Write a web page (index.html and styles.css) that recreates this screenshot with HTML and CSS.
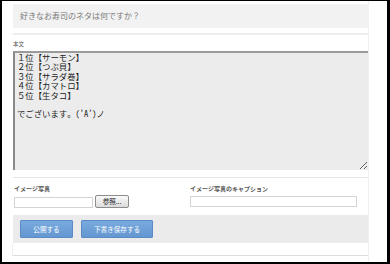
FILE: index.html
```html
<!DOCTYPE html>
<html lang="ja">
<head>
    <meta charset="UTF-8">
    <title>投稿の編集</title>
    <link rel="stylesheet" href="styles.css">
</head>
<body>
    <div class="frame">
        <div class="panel">
            <div class="question">好きなお寿司のネタは何ですか？</div>
            <div class="rule"></div>
            <div class="body-label">本文</div>
            <textarea class="body-text" readonly>１位【サーモン】
２位【つぶ貝】
３位【サラダ巻】
４位【カマトロ】
５位【生タコ】

でございます。('A')ノ</textarea>
            <div class="fields">
                <div class="field field-photo">
                    <div class="field-label">イメージ写真</div>
                    <div class="file-row">
                        <input type="text" class="text-input file-path">
                        <button class="browse">参照...</button>
                    </div>
                </div>
                <div class="field field-caption">
                    <div class="field-label">イメージ写真のキャプション</div>
                    <input type="text" class="text-input caption">
                </div>
            </div>
            <div class="actions">
                <button class="btn">公開する</button>
                <button class="btn btn-wide">下書き保存する</button>
            </div>
            <div class="footer-space"></div>
        </div>
    </div>
</body>
</html>
```

FILE: styles.css
```css
body {
    margin: 0;
    padding: 0;
    background-color: #fff;
    font-family: "Noto Sans CJK JP", "Noto Sans", sans-serif;
}
.frame {
    width: 390px;
    height: 264px;
    box-sizing: border-box;
    border-style: solid;
    border-color: #000;
    border-width: 1px 3px 2px 2px;
    padding-left: 11px;
    overflow: hidden;
    background-color: #fff;
}
.panel {
    width: 356px;
    height: 100%;
    box-sizing: border-box;
    border-right: 1px solid #efefef;
    display: flex;
    flex-direction: column;
}
.question {
    margin-top: 3px;
    height: 24px;
    line-height: 24px;
    padding-left: 7px;
    background-color: #f2f2f2;
    color: #7a7a7a;
    font-size: 8px;
    margin-right: -1px;
}
.rule {
    margin-top: 5px;
    height: 2px;
    background-color: #ededed;
}
.body-label {
    margin-top: 4px;
    height: 10px;
    line-height: 10px;
    font-size: 5.5px;
    color: #555;
}
.body-text {
    display: block;
    margin: 2px 0 0;
    height: 119px;
    width: 355px;
    box-sizing: border-box;
    border-style: solid;
    border-color: #9a9a9a #f0f0f0 #f0f0f0 #8a8a8a;
    border-width: 2px 0 0 2px;
    background-color: #ececec;
    padding: 0 2px;
    font-family: "Noto Sans Mono CJK JP", "Noto Sans CJK JP", monospace;
    font-size: 8.4px;
    line-height: 9.4px;
    color: #222;
    outline: none;
}
.fields {
    margin-top: 7px;
    border-top: 1px solid #e4e4e4;
    height: 37px;
    display: flex;
    padding: 0 1px;
}
.field-label {
    margin-top: 5px;
    height: 12px;
    line-height: 12px;
    font-size: 6px;
    font-weight: bold;
    color: #555;
}
.field-photo {
    width: 177px;
}
.field-caption {
    flex: 1;
    padding-right: 10px;
}
.file-row {
    display: flex;
    align-items: center;
    gap: 2px;
}
.text-input {
    display: block;
    box-sizing: border-box;
    height: 11px;
    margin: 1px 0 0;
    padding: 0;
    border: 1px solid #d4d4d4;
    background-color: #fff;
}
.file-path {
    width: 79px;
}
.caption {
    width: 167px;
}
.browse {
    width: 34px;
    height: 13px;
    padding: 0;
    margin: 0;
    border: 1px solid #8c8c8c;
    border-radius: 2px;
    background: linear-gradient(#fafafa, #dcdcdc);
    font-family: inherit;
    font-size: 6.5px;
    line-height: 11px;
    color: #222;
}
.actions {
    height: 28px;
    box-sizing: border-box;
    background-color: #ebebeb;
    padding: 5px 0 0 7px;
    display: flex;
    align-items: flex-start;
    gap: 8px;
}
.btn {
    width: 53px;
    height: 18px;
    padding: 0;
    margin: 0;
    border: 1px solid #5a8bc5;
    border-radius: 1px;
    background: linear-gradient(#78aadf, #6497d0);
    color: #fff;
    font-family: inherit;
    font-size: 6.6px;
    line-height: 16px;
}
.btn-wide {
    width: 72px;
}
.footer-space {
    height: 12px;
    border-bottom: 1px solid #dedede;
    border-left: 1px solid #efefef;
    margin-left: -1px;
}
```
